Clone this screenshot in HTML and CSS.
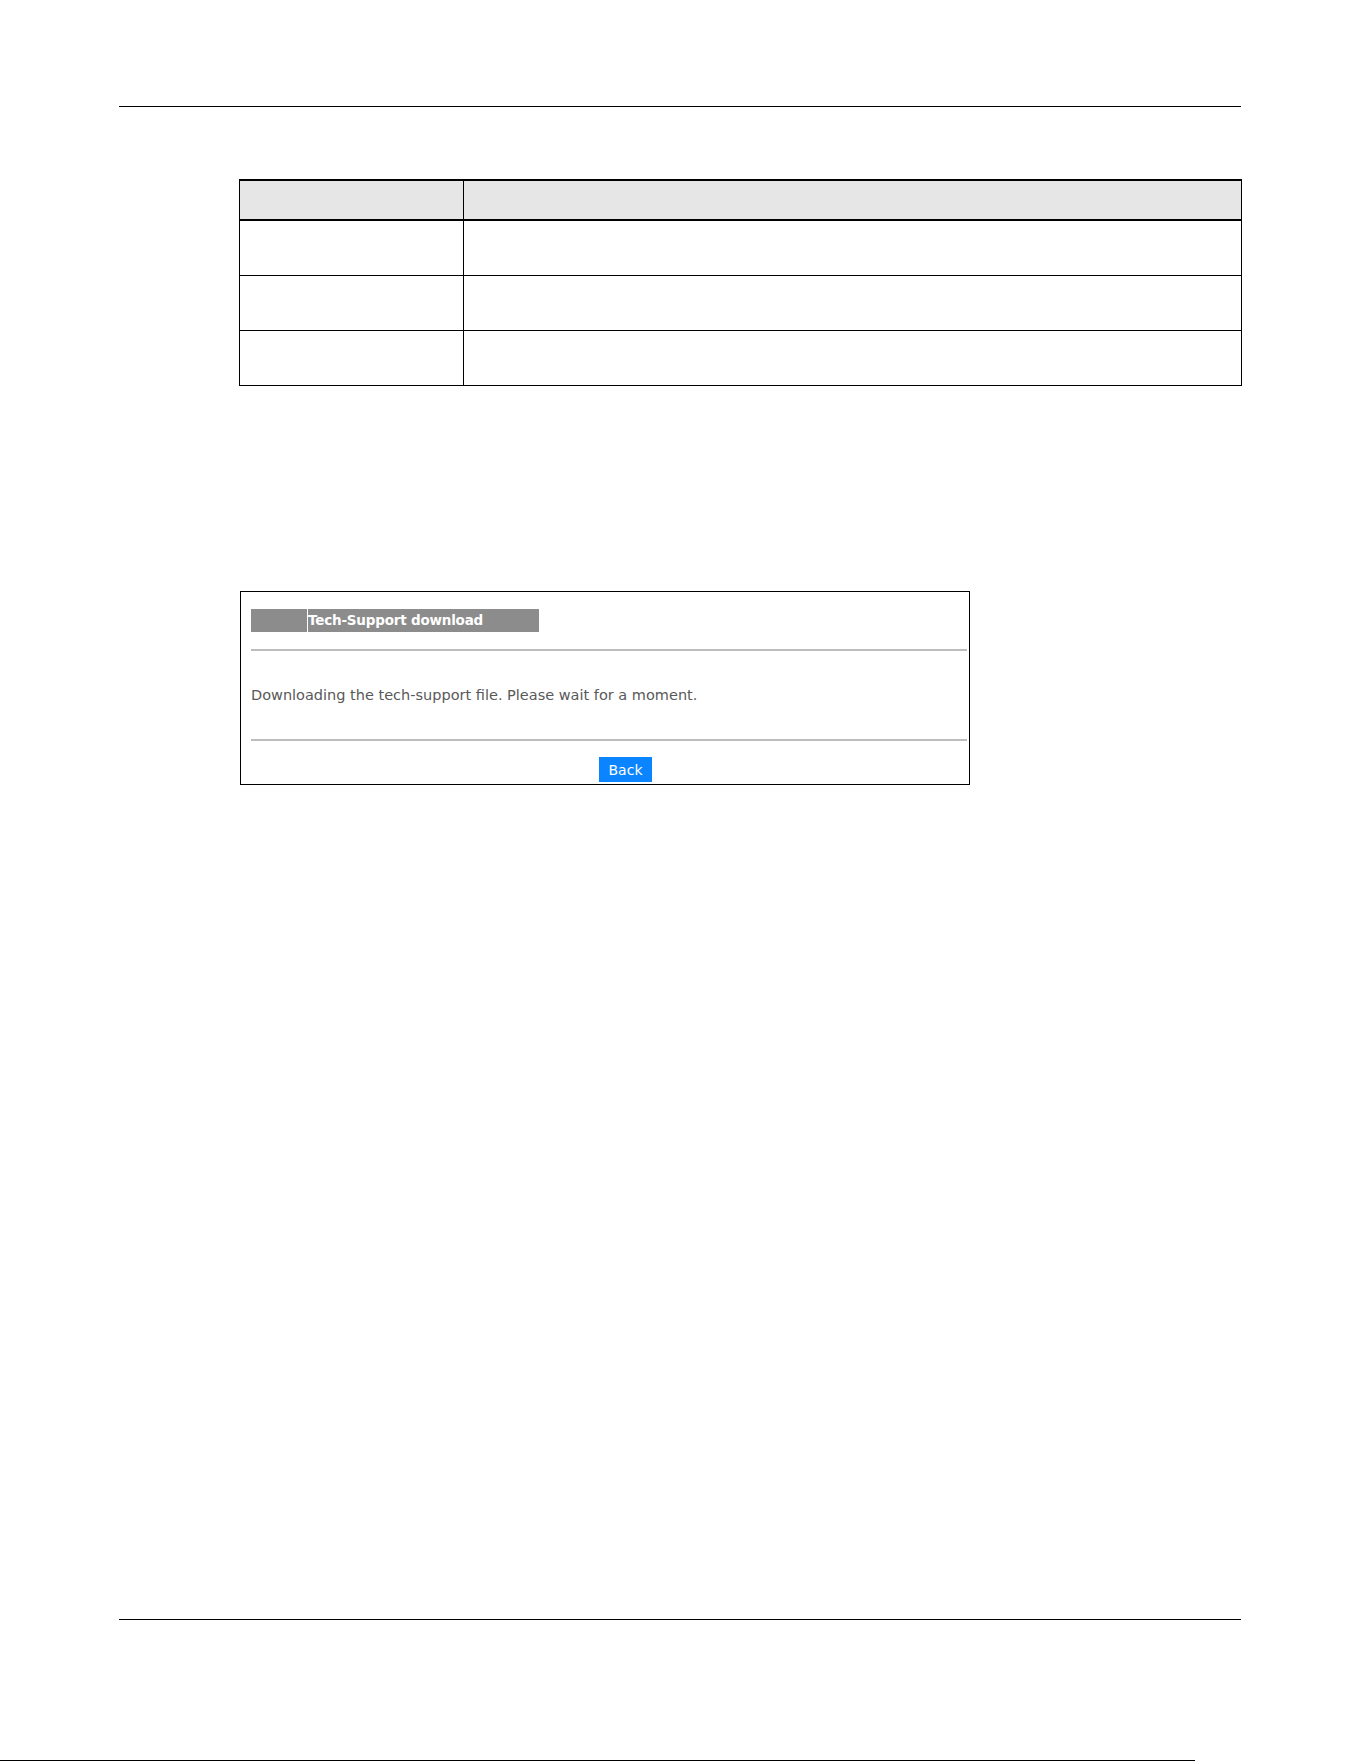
FILE: index.html
```html
<!DOCTYPE html>
<html lang="en">
<head>
    <meta charset="UTF-8">
    <meta name="viewport" content="width=device-width, initial-scale=1.0">
    <title>Tech-Support download</title>
    <link rel="stylesheet" href="styles.css">
</head>
<body>
    <div class="page">
        <div class="page-rule page-rule-top"></div>

        <table class="field-table">
            <thead>
                <tr>
                    <th class="col-label"></th>
                    <th></th>
                </tr>
            </thead>
            <tbody>
                <tr><td class="col-label"></td><td></td></tr>
                <tr><td class="col-label"></td><td></td></tr>
                <tr><td class="col-label"></td><td></td></tr>
            </tbody>
        </table>

        <!-- tech-support download panel -->
        <div class="panel">
            <div class="panel-title">
                <span class="panel-title-pad"></span>
                <span class="panel-title-text">Tech-Support download</span>
            </div>
            <div class="panel-sep panel-sep-top"></div>
            <p class="panel-msg">Downloading the tech-support file. Please wait for a moment.</p>
            <div class="panel-sep"></div>
            <div class="panel-actions">
                <button class="btn-back" type="button">Back</button>
            </div>
        </div>

        <div class="page-rule page-rule-bottom"></div>
    </div>
    <div class="edge-line"></div>
</body>
</html>
```

FILE: styles.css
```css
body {
    margin: 0;
    padding: 0;
    background-color: #ffffff;
    font-family: "DejaVu Sans", sans-serif;
}
.page {
    width: 1122px;
    margin-left: 119px;
    padding-top: 106px;
}
.page-rule {
    height: 1px;
    background-color: #000000;
}
.page-rule-bottom {
    margin-top: 834px;
}

/* description table */
.field-table {
    width: 1003px;
    margin-top: 72px;
    margin-left: 120px;
    border-collapse: collapse;
}
.field-table th,
.field-table td {
    border: 1px solid #000000;
    padding: 0;
}
.field-table th {
    height: 38px;
    background-color: #e6e6e6;
    border-top: 2px solid #000000;
    border-bottom: 2px solid #000000;
}
.field-table td {
    height: 54px;
}
.field-table .col-label {
    width: 223px;
}

/* download panel */
.panel {
    width: 730px;
    height: 194px;
    margin-top: 205px;
    margin-left: 121px;
    padding: 17px 2px 0 10px;
    border: 1px solid #000000;
    box-sizing: border-box;
}
.panel-title {
    display: flex;
    width: 288px;
    height: 23px;
    background-color: #8c8c8c;
}
.panel-title-pad {
    width: 56px;
    border-right: 1px solid #ffffff;
}
.panel-title-text {
    color: #ffffff;
    font-weight: bold;
    font-size: 13.5px;
    line-height: 23px;
    letter-spacing: -0.2px;
}
.panel-sep {
    height: 2px;
    background-color: #bdbdbd;
}
.panel-sep-top {
    margin-top: 17px;
}
.panel-msg {
    margin: 0;
    height: 88px;
    line-height: 88px;
    font-size: 14.5px;
    color: #595959;
}
.panel-actions {
    padding-left: 348px;
    padding-top: 16px;
}
.btn-back {
    display: block;
    width: 53px;
    height: 25px;
    padding: 0;
    border: none;
    border-radius: 0;
    background-color: #0a84ff;
    color: #ffffff;
    font-family: "DejaVu Sans", sans-serif;
    font-size: 14px;
}

.edge-line {
    width: 1195px;
    height: 1px;
    margin-top: 140px;
    background-color: #000000;
}
```
